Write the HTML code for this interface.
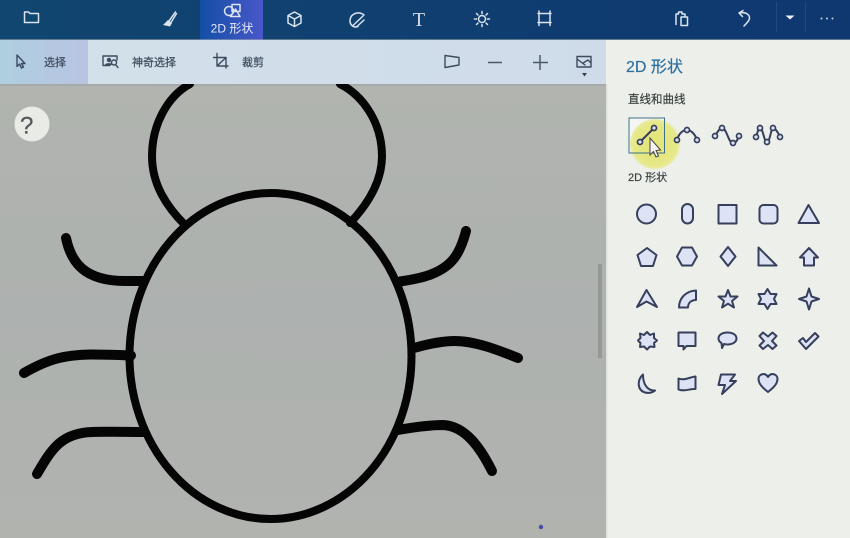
<!DOCTYPE html>
<html><head><meta charset="utf-8">
<style>
html,body{margin:0;padding:0;background:#b0b3af;width:850px;height:538px;overflow:hidden}
svg{display:block;position:absolute;left:0;top:0;filter:blur(.35px)}
text{font-family:"Liberation Sans","Noto Sans CJK SC",sans-serif}
.t{fill:none;stroke:#dbe4ee;stroke-width:1.5;stroke-linejoin:round;stroke-linecap:round}
.b{fill:none;stroke:#3c4b5e;stroke-width:1.4;stroke-linejoin:round;stroke-linecap:round}
.s{fill:#dde2f4;stroke:#363f5c;stroke-width:2;stroke-linejoin:round;stroke-linecap:round}
.l{fill:none;stroke:#363f5c;stroke-width:2}
.n{fill:#dde2f4;stroke:#363f5c;stroke-width:1.7}
.k{fill:none;stroke:#050505;stroke-linecap:round;stroke-linejoin:round}
.d{stroke:#3f4d5e;stroke-width:.25}
</style></head><body>
<svg width="850" height="538" viewBox="0 0 850 538" xmlns="http://www.w3.org/2000/svg">
<defs>
<linearGradient id="top" x1="0" x2="1" y1="0" y2="0"><stop offset="0" stop-color="#10466f"/><stop offset="1" stop-color="#0f3770"/></linearGradient>
<linearGradient id="act" x1="0" x2="1" y1="0" y2="0"><stop offset="0" stop-color="#124fa6"/><stop offset="1" stop-color="#4a56c9"/></linearGradient>
<linearGradient id="sel" x1="0" x2="1" y1="0" y2="0"><stop offset="0" stop-color="#aecfe0"/><stop offset="1" stop-color="#b9c4e2"/></linearGradient>
<linearGradient id="bar" x1="0" x2="1" y1="0" y2="0"><stop offset="0" stop-color="#d3e1ea"/><stop offset="1" stop-color="#cfdbe9"/></linearGradient>
<linearGradient id="cv" x1="0" x2="0" y1="0" y2="1"><stop offset="0" stop-color="#b1b4af"/><stop offset=".5" stop-color="#adb1af"/><stop offset="1" stop-color="#b1b3af"/></linearGradient>
<radialGradient id="yl"><stop offset="0" stop-color="#e3e474"/><stop offset=".85" stop-color="#e6e888"/><stop offset="1" stop-color="#eaecaa"/></radialGradient>
</defs>

<!-- canvas -->
<rect x="0" y="84" width="606" height="454" fill="url(#cv)"/>
<rect x="0" y="84" width="606" height="2" fill="#a7aaaa"/>
<g class="k" stroke-width="8">
<ellipse cx="270.500" cy="356" rx="141" ry="163"/>
<path d="M190 84C168 96 152 124 152 156C152 184 166 206 185 225"/>
<path d="M340 84C364 96 382 124 382 156C382 182 368 204 350 223"/>
<path d="M66 238C71 262 84 281 125 281L143 281" stroke-width="10"/>
<path d="M24 373C50 358 66 355 90 354.500C105 354.500 120 355 131 355.500" stroke-width="10"/>
<path d="M37 474C52 448 62 433 92 432C110 431.500 125 432 143 432" stroke-width="10"/>
<path d="M466 231C460 254 452 266 432 274C420 279 408 280 398 282" stroke-width="10"/>
<path d="M414 348C428 344 442 341 455 341C475 341 498 350 518 358" stroke-width="10"/>
<path d="M398 430C415 427 430 425 443 425C465 426 480 447 492 471" stroke-width="10"/>
</g>
<rect x="598" y="264" width="4" height="94" fill="#959994"/>
<circle cx="541" cy="527" r="2.200" fill="#4a48a8"/>
<circle cx="32" cy="124" r="17.500" fill="#e9ebe6"/>
<text x="20" y="133.500" font-size="24" fill="#55575a" stroke="#55575a" stroke-width=".3">?</text>

<!-- top bar -->
<rect x="0" y="0" width="850" height="39.500" fill="url(#top)"/>
<rect x="200" y="0" width="63" height="39.500" fill="url(#act)"/>
<rect x="776" y="2" width="1" height="30" fill="#1f4a80"/>
<rect x="805" y="2" width="1" height="30" fill="#1f4a80"/>
<!-- folder -->
<path class="t" d="M24.500 12V22.500H38.500V13.500H30L28.500 12Z"/>
<!-- brush -->
<path class="t" d="M175.500 12L169 21M176.500 13.500L171 22.500"/>
<path d="M168 20L172 23L170 26.500L163 25L165.500 22.500Z" fill="#dbe4ee"/>
<!-- shapes -->
<g class="t"><circle cx="229" cy="11" r="4.500"/><rect x="232" y="4.500" width="8" height="7"/><path d="M235.500 9L240 16.500H230.500Z"/></g>
<text x="232" y="32.500" text-anchor="middle" font-size="12" fill="#e3eaf6">2D 形状</text>
<!-- cube -->
<path class="t" d="M294.500 12L301 15.500V23L294.500 26.500L288 23V15.500ZM288 15.500L294.500 19L301 15.500M294.500 19V26.500"/>
<!-- sticker -->
<path class="t" d="M364 15C359 11 351 13 350 20C349.500 26 355 28 358 26.500M353 25.500L363 16M357 26.500L364 20"/>
<!-- T -->
<text x="419" y="26" text-anchor="middle" font-size="20" fill="#d3dde9" style='font-family:"Liberation Serif",serif'>T</text>
<!-- sun -->
<g class="t"><circle cx="482" cy="19" r="3.500"/><path d="M482 11.500V13.500M482 24.500V26.500M474.500 19H476.500M487.500 19H489.500M476.500 13.500L478 15M486 23L487.500 24.500M476.500 24.500L478 23M486 15L487.500 13.500"/></g>
<!-- canvas icon -->
<path class="t" d="M538 13.500H551M538 22.500H551M539 11V25.500M550 11V25.500"/>
<!-- paste -->
<path class="t" d="M676 24.500V14H678.500V12H682V14H685V16M681 17H687.500V25.500H681Z"/>
<!-- undo -->
<path class="t" d="M739 13L743 10.500M739 13L742.500 16.500M739.500 13C746 11.500 751 15 749 20C748 22 746 24 744 26"/>
<path d="M785.500 15.500H794.500L790 19.500Z" fill="#eef3f8"/>
<g fill="#c3d0de"><circle cx="821.500" cy="18.500" r="1"/><circle cx="827" cy="18.500" r="1"/><circle cx="832.500" cy="18.500" r="1"/></g>

<!-- second bar -->
<rect x="0" y="40" width="606" height="44" fill="url(#bar)"/>
<rect x="0" y="40" width="88" height="44" fill="url(#sel)"/>
<path class="b" d="M17 55V66.500L19.500 64L21.500 68L23.500 67L21.500 63.500H25Z"/>
<text class="d" x="44" y="66" font-size="11" fill="#3f4d5e">选择</text>
<path class="b" d="M103 56H117V60M103 56V65.500H110"/>
<circle cx="109" cy="60" r="2.200" fill="#3c4b5e"/><path d="M105 65C105 62.500 113 62.500 113 65Z" fill="#3c4b5e"/>
<circle class="b" cx="114" cy="62.500" r="2.500"/><path class="b" d="M115.500 64.500L118 67.500"/>
<text class="d" x="132" y="66" font-size="11" fill="#3f4d5e">神奇选择</text>
<path class="b" d="M217 53.500V66H228M213.500 57.500H226V68M217 66L226 57.500"/>
<text class="d" x="242" y="66" font-size="11" fill="#3f4d5e">裁剪</text>
<path class="b" d="M445 55.500L459 57.500V65L445 67.500Z"/>
<path d="M488 62.500H502" stroke="#4a5868" stroke-width="1.500"/>
<path d="M540 55V70M533 62.500H548" stroke="#4a5868" stroke-width="1.500"/>
<path class="b" d="M577 56.500H591V67H577ZM577 59L585 65M583 63L588 60L591 63"/>
<path d="M582 73H587L584.500 76.500Z" fill="#33414f"/>

<!-- panel -->
<rect x="606" y="40" width="244" height="498" fill="#edf0ea"/>
<rect x="606" y="84" width="1.500" height="454" fill="#dfe2dc"/>
<text x="626" y="72" font-size="16" fill="#2f6f9f" stroke="#2f6f9f" stroke-width=".2">2D 形状</text>
<text x="628" y="103" font-size="11.500" fill="#38403f" stroke="#38403f" stroke-width=".2">直线和曲线</text>
<text x="628" y="181" font-size="11" fill="#38403f" stroke="#38403f" stroke-width=".2">2D 形状</text>

<!-- selected -->
<rect x="629" y="118" width="35.500" height="35" fill="#f4f6f1"/>
<circle cx="655" cy="144" r="25" fill="url(#yl)"/>
<rect x="629" y="118" width="35.500" height="35" fill="none" stroke="#3f7089" stroke-width="1"/>
<path class="l" d="M640 142L654 128"/>
<circle class="n" cx="640" cy="142" r="2.500"/><circle class="n" cx="654" cy="128" r="2.500"/>
<path d="M650 138V155L653.500 151.500L656 157L658.500 156L656 150.500L660.500 150Z" fill="#f4f4f4" stroke="#444" stroke-width="1"/>

<path class="l" d="M677 140C679 133 683 130 687 130C691 130 695 134 697 140"/>
<circle class="n" cx="677" cy="140" r="2.500"/><circle class="n" cx="687" cy="130" r="2.500"/><circle class="n" cx="697" cy="140" r="2.500"/>
<path class="l" d="M715 136C718 131 720 128 722 128C727 128 728 143 733 143C736 143 738 139 739 136"/>
<circle class="n" cx="715" cy="136" r="2.500"/><circle class="n" cx="722" cy="128" r="2.500"/><circle class="n" cx="733" cy="143" r="2.500"/><circle class="n" cx="739" cy="136" r="2.500"/>
<path class="l" d="M756 137C758 130 759 128 760 128C763 128 764 142 767 142C770 142 771 128 773 128C775 128 778 132 780 137"/>
<circle class="n" cx="756" cy="137" r="2.500"/><circle class="n" cx="760" cy="128" r="2.500"/><circle class="n" cx="767" cy="142" r="2.500"/><circle class="n" cx="773" cy="128" r="2.500"/><circle class="n" cx="780" cy="137" r="2.500"/>

<!-- shapes row 1 -->
<g class="s">
<circle cx="646.500" cy="214" r="9.500"/>
<rect x="682" y="204" width="11" height="19.500" rx="5.500"/>
<rect x="718.500" y="205" width="18" height="18.500"/>
<rect x="759.500" y="205" width="18" height="18.500" rx="4"/>
<path d="M808.500 205L819 223H798.500Z"/>

<!-- row 2 -->
<path d="M647 248L656.500 255L653 266H641L637.500 255Z"/>
<path d="M682 247.500H692L697 256.500L692 265.500H682L677 256.500Z"/>
<path d="M728 247L735.500 256.500L728 266L720.500 256.500Z"/>
<path d="M758.500 247.500L776.500 265.500H758.500Z"/>
<path d="M809 248L818 257.500H814V265.500H804V257.500H800Z"/>

<!-- row 3 -->
<path d="M646.500 290L657 307L646.500 301.500L637 307Z"/>
<path d="M696 290.500V300C691 300 688 303 688 307.500H679C679 298 686 291 696 290.500Z"/>
<path d="M728 290L730.500 296.500H737.500L732 301L734 307.500L728 303.700L722 307.500L724 301L718.500 296.500H725.500Z"/>
<path d="M767.500 289L770.500 294H776.500L774 299L776.500 304H770.500L767.500 309L764.500 304H758.500L761 299L758.500 294H764.500Z"/>
<path d="M809 288.500L811.500 296.500L819 299L811.500 301.500L809 309.500L806.500 301.500L799 299L806.500 296.500Z"/>

<!-- row 4 -->
<path d="M647 332L650 335L654 333.500L654 338L657 340.500L654 343L654.500 347L650 346.500L647 349.500L644 346.500L640 347L640.500 343L638 340.500L640.500 338L640 333.500L644 335Z"/>
<path d="M678.500 332.500H695.500V346H686.500L683.500 349.500V346H678.500Z"/>
<path d="M727.500 332.500C733 332.500 736.500 335 736.500 338.500C736.500 342 732.500 344.500 727.500 344.500C726 344.500 725 344.200 724 344L722 348L721.500 343C719.500 342 718.500 340.500 718.500 338.500C718.500 335 722 332.500 727.500 332.500Z"/>
<path d="M763 332.500L768 336.500L772.500 332.500L776.500 336L772 341L776.500 345.500L772.500 349L768 345L763 349L759.500 345.500L764 341L759.500 336Z"/>
<path d="M799 341L803 338L806 342L815 333L818.500 336.500L806 349Z"/>

<!-- row 5 -->
<path d="M643 374.500C637 380 637 390 645 392.500C649 393.500 653 392.500 655 390.500C648 391 643 385 643 374.500Z"/>
<path d="M678.500 378.500C684 381 690 377 695.500 376.500V389C690 388.500 684 392 678.500 389.500Z"/>
<path d="M721 374.500H735L730 381H736L722 394L725 385H718.500Z"/>
<path d="M768 392C763 388 758.500 384 758.500 379C758.500 374 765 372 768 377C771 372 777.500 374 777.500 379C777.500 384 773 388 768 392Z"/>
</g>
</svg>
</body></html>
